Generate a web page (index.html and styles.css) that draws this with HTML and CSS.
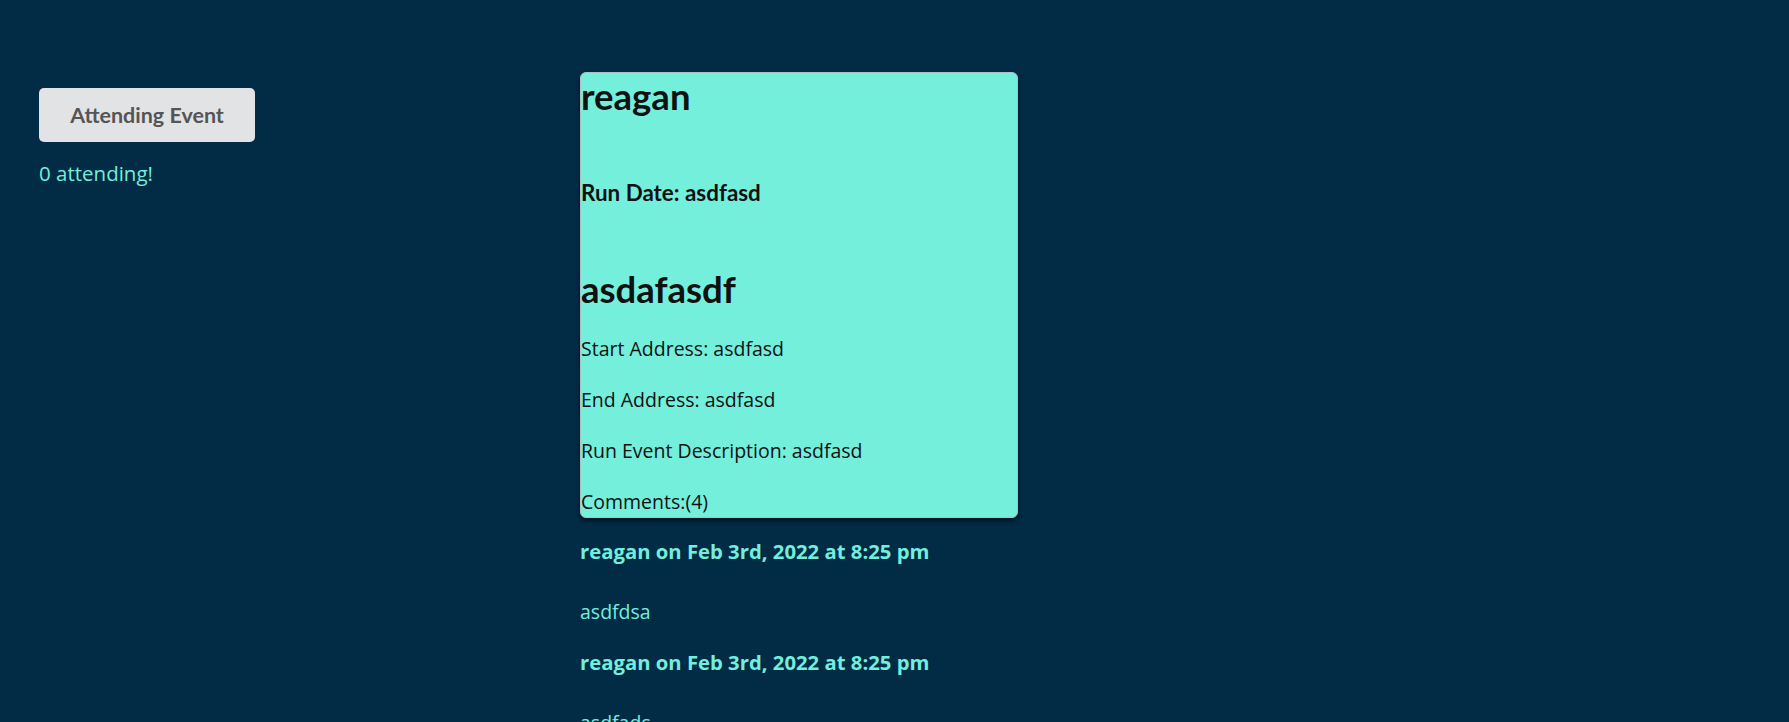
FILE: index.html
```html
<!DOCTYPE html>
<html lang="en">
<head>
<meta charset="utf-8">
<title>Run Event</title>
<link rel="stylesheet" href="styles.css">
</head>
<body>
<div class="page">
  <aside class="side">
    <button class="attend-btn" type="button">Attending Event</button>
    <p class="attend-count">0 attending!</p>
  </aside>
  <main class="main">
    <section class="card">
      <h1 class="card-user">reagan</h1>
      <h3 class="card-date">Run Date: asdfasd</h3>
      <h1 class="card-title">asdafasdf</h1>
      <p class="card-line">Start Address: asdfasd</p>
      <p class="card-line">End Address: asdfasd</p>
      <p class="card-line">Run Event Description: asdfasd</p>
      <p class="card-line card-last">Comments:(4)</p>
    </section>
    <div class="comments">
      <div class="comment">
        <p class="comment-head">reagan on Feb 3rd, 2022 at 8:25 pm</p>
        <p class="comment-body">asdfdsa</p>
      </div>
      <div class="comment">
        <p class="comment-head">reagan on Feb 3rd, 2022 at 8:25 pm</p>
        <p class="comment-body">asdfads</p>
      </div>
    </div>
  </main>
</div>
</body>
</html>
```
FILE: styles.css
```css
html, body {
  margin: 0;
  padding: 0;
  background: #022b46;
}
body {
  font-family: "Open Sans", "Noto Sans", sans-serif;
  color: #73eedc;
  font-size: 19.5px;
}
.page {
  display: flex;
  align-items: flex-start;
  padding-top: 72px;
}
.side {
  box-sizing: border-box;
  width: 580px;
  padding-left: 39px;
  padding-top: 16px;
}
.attend-btn {
  display: block;
  width: 216px;
  height: 54px;
  border: none;
  border-radius: 5px;
  background: #e2e3e5;
  color: #555555;
  font-family: Lato, sans-serif;
  font-weight: 700;
  font-size: 21.5px;
  padding: 0;
  cursor: pointer;
}
.attend-count {
  margin: 17px 0 0;
  line-height: 28px;
  font-size: 20.5px;
  color: #73eedc;
}
.main {
  width: 438px;
}
.card {
  box-sizing: border-box;
  background: #73efdc;
  border: 1px solid #a8c2c8;
  border-radius: 6px;
  box-shadow: 0 3px 4px rgba(0, 0, 0, 0.55);
  color: #111111;
  padding: 2px 0 1px;
}
.card-user,
.card-title {
  font-family: Lato, sans-serif;
  font-weight: 700;
  font-size: 36.5px;
  line-height: 43px;
  margin: 0;
}
.card-date {
  font-family: Lato, sans-serif;
  font-weight: 700;
  font-size: 22.4px;
  line-height: 26px;
  margin: 62px 0 0;
}
.card-title {
  margin-top: 62px;
}
.card-line {
  margin: 23px 0 0;
  line-height: 28px;
}
.card-title + .card-line {
  margin-top: 24px;
}
.comments {
  padding-top: 19px;
}
.comment-head {
  margin: 0;
  font-weight: 700;
  font-size: 20.3px;
  line-height: 28px;
}
.comment-body {
  margin: 33px 0 22px;
  line-height: 28px;
}
```
